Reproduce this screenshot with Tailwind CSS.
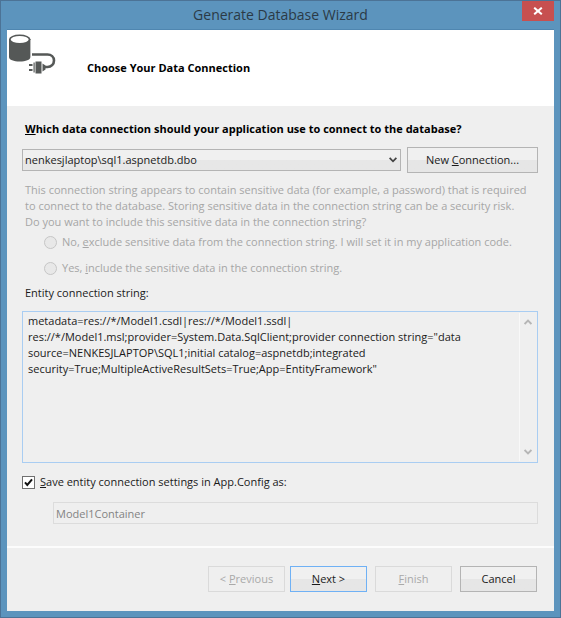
<!DOCTYPE html>
<html lang="en">
<head>
<meta charset="utf-8">
<meta name="viewport" content="width=device-width, initial-scale=1">
<title>Generate Database Wizard</title>
<script src="https://cdn.jsdelivr.net/npm/@tailwindcss/browser@4"></script>
</head>
<body class="font-['Open_Sans','Noto_Sans',sans-serif] text-[11px] leading-4 text-[#1a1a1a]">
<div class="flex min-h-screen flex-col border border-[#4c7396] bg-[#5c94bd] px-1.5 pb-1.5">
  <header class="relative flex h-[29px] items-center justify-center border-b border-[#4f86b0]">
    <h1 class="text-sm leading-5 text-[#2b3a46]">Generate Database Wizard</h1>
    <button type="button" aria-label="Close" class="absolute top-0 right-0 flex h-5 w-8 items-center justify-center bg-[#c75050]">
      <svg class="h-2 w-2.5" viewBox="0 0 10 8" fill="none" stroke="#fff" stroke-width="2"><path d="M1.2.7 8.8 7.3M8.8.7 1.2 7.3"/></svg>
    </button>
  </header>
  <main class="flex flex-1 flex-col bg-[#efefef]">
    <div class="flex h-[76px] items-center gap-[31px] bg-white pl-0.5">
      <svg class="mb-7 h-10 w-[47px] shrink-0" viewBox="0 0 47 40" fill="none">
        <path d="M0 5v18c0 2.800 4.700 4.500 10.700 4.500s10.700-1.700 10.700-4.500V5z" fill="#555857"/>
        <ellipse cx="10.700" cy="5.300" rx="10.700" ry="4.800" fill="#555857"/>
        <ellipse cx="10.700" cy="5.500" rx="9" ry="3.500" fill="#fff"/>
        <path d="M23 20.500h15.500c3.700 0 6.500 2.300 6.500 6s-2.800 6.500-6.500 6.500H34" stroke="#555857" stroke-width="2.600"/>
        <path d="M26.500 27.500h6v12h-6zM33.500 29.500l3 2v4l-3 2zM24.500 28.500h1.200v10h-1.200zM20 30h3.500v2H20zM20 35h3.500v2H20z" fill="#555857"/>
      </svg>
      <h2 class="font-bold text-black">Choose Your Data Connection</h2>
    </div>
    <form class="flex flex-1 flex-col">
      <div class="flex flex-1 flex-col pt-[15px] pr-4 pb-[22px] pl-[15px]">
        <label for="connection" class="pl-[3px] font-bold text-black"><u>W</u>hich data connection should your application use to connect to the database?</label>
        <div class="mt-[10px] flex items-center gap-1.5">
          <div class="relative flex-1">
            <select id="connection" class="block h-[22px] w-full appearance-none border border-[#b4b4b4] bg-linear-to-b from-[#f0f0f0] from-50% to-[#e7e7e7] to-50% pr-5 pl-0.5">
              <option>nenkesjlaptop\sql1.aspnetdb.dbo</option>
            </select>
            <svg class="pointer-events-none absolute top-2 right-1 h-1.5 w-2" viewBox="0 0 8 6" fill="none" stroke="#444" stroke-width="1.800"><path d="M.6.8 4 4.300 7.400.8"/></svg>
          </div>
          <button type="button" class="h-[26px] w-[131px] border border-[#b4b4b4] bg-linear-to-b from-[#f0f0f0] from-50% to-[#e6e6e6] to-50%">New <u>C</u>onnection...</button>
        </div>
        <fieldset disabled class="mt-[9px] text-[#a6a6a6]">
          <p class="pl-[3px]">This connection string appears to contain sensitive data (for example, a password) that is required<br>to connect to the database. Storing sensitive data in the connection string can be a security risk.<br>Do you want to include this sensitive data in the connection string?</p>
          <div class="mt-1 flex flex-col gap-[10px] pl-[22px]">
            <label class="flex items-center gap-[5px]"><input type="radio" name="sensitive" class="h-[13px] w-[13px] appearance-none rounded-full border border-[#c6c6c6] bg-[#e8e8e8]"><span>No, <u>e</u>xclude sensitive data from the connection string. I will set it in my application code.</span></label>
            <label class="flex items-center gap-[5px]"><input type="radio" name="sensitive" class="h-[13px] w-[13px] appearance-none rounded-full border border-[#c6c6c6] bg-[#e8e8e8]"><span>Yes, <u>i</u>nclude the sensitive data in the connection string.</span></label>
          </div>
        </fieldset>
        <label for="entity" class="mt-[9px] pl-[3px]">Entity connection string:</label>
        <div class="mt-[10px] flex min-h-[150px] flex-1 border border-[#a9cdf2] p-px">
          <textarea id="entity" readonly class="flex-1 resize-none overflow-hidden border-r border-[#f8f8f8] pl-1 outline-none">metadata=res://*/Model1.csdl|res://*/Model1.ssdl|
res://*/Model1.msl;provider=System.Data.SqlClient;provider connection string="data
source=NENKESJLAPTOP\SQL1;initial catalog=aspnetdb;integrated
security=True;MultipleActiveResultSets=True;App=EntityFramework"</textarea>
          <div class="flex w-4 flex-col items-center justify-between pt-1.5 pb-1.5">
            <svg class="h-1.5 w-2" viewBox="0 0 8 6" fill="none" stroke="#b5b5b5" stroke-width="1.800"><path d="M.6 5 4 1.500 7.400 5"/></svg>
            <svg class="h-1.5 w-2" viewBox="0 0 8 6" fill="none" stroke="#b5b5b5" stroke-width="1.800"><path d="M.6 1 4 4.500 7.400 1"/></svg>
          </div>
        </div>
        <label class="mt-[11px] flex items-center gap-[5px]">
          <span class="relative flex">
            <input type="checkbox" checked class="h-[13px] w-[13px] appearance-none border border-[#707070] bg-white">
            <svg class="pointer-events-none absolute inset-0 h-[13px] w-[13px]" viewBox="0 0 13 13" fill="none" stroke="#111" stroke-width="2"><path d="m3 6.300 2.300 2.700L10 3.300"/></svg>
          </span>
          <span><u>S</u>ave entity connection settings in App.Config as:</span>
        </label>
        <input type="text" disabled aria-label="Connection settings name" value="Model1Container" class="mt-3 ml-[31px] h-[22px] border border-[#dcdcdc] pl-0.5 text-[#838383]">
      </div>
      <div class="flex justify-end gap-2 border-t-2 border-[#fcfcfc] pt-[18px] pr-[17px] pb-[19px] pl-4">
        <div class="flex gap-[5px]">
          <button type="button" disabled class="h-[26px] w-[77px] border border-[#dadada] text-[#a9a9a9]">&lt; <u>P</u>revious</button>
          <button type="submit" class="h-[26px] w-[77px] border border-[#6fb1f5] bg-linear-to-b from-[#f0f0f0] from-50% to-[#e6e6e6] to-50%"><u>N</u>ext &gt;</button>
        </div>
        <button type="button" disabled class="h-[26px] w-[77px] border border-[#dadada] text-[#a9a9a9]"><u>F</u>inish</button>
        <button type="button" class="h-[26px] w-[77px] border border-[#b4b4b4] bg-linear-to-b from-[#f0f0f0] from-50% to-[#e6e6e6] to-50%">Cancel</button>
      </div>
    </form>
  </main>
</div>
</body>
</html>
